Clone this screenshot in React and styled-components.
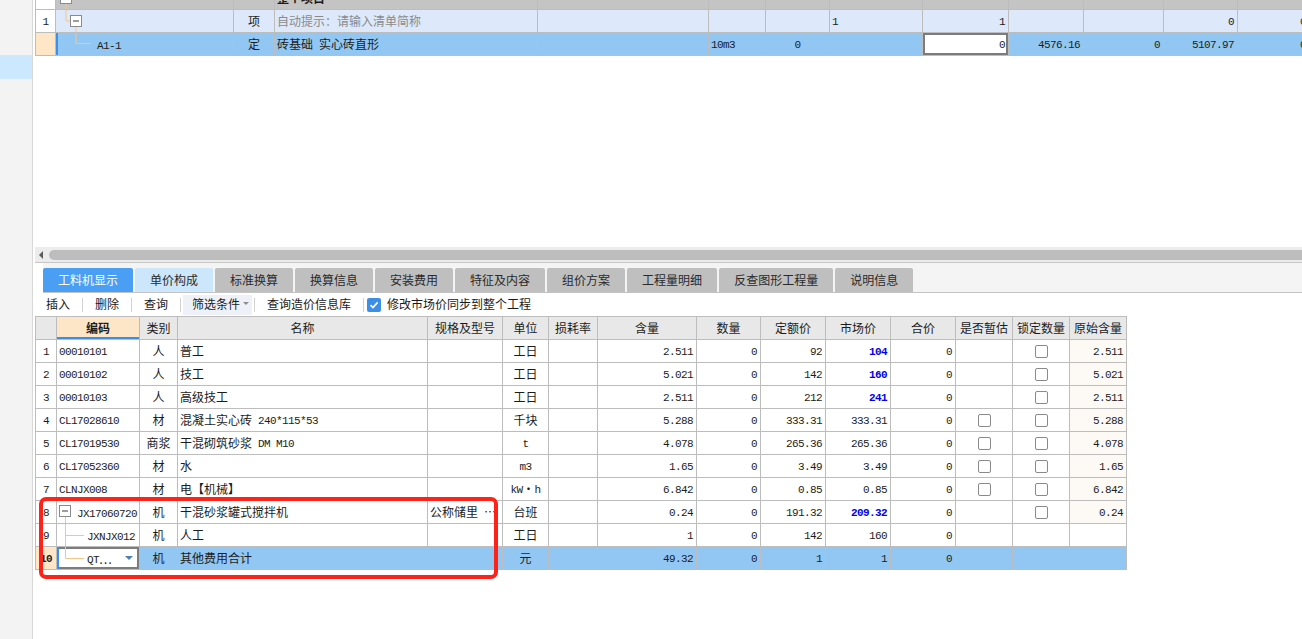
import React from 'react';
import styled, { createGlobalStyle } from 'styled-components';

const GlobalStyle = createGlobalStyle`
  html, body {
    margin: 0;
    padding: 0;
    background: #fff;
    overflow: hidden;
  }
  body {
    font-family: "Noto Sans CJK SC", "Microsoft YaHei", sans-serif;
    font-size: 12px;
    color: #1c1c1c;
  }
`;

const GRID_LINE = '#bdbdbd';
const TOP_COLS = [20, 178, 41, 263, 171, 57, 64, 93, 86, 75, 80, 74, 72];
const BOT_COLS = [21, 83, 38, 250, 75, 46, 49, 99, 64, 65, 65, 65, 57, 57, 57];

const Page = styled.div`
  display: flex;
  height: 639px;
  overflow: hidden;
`;

const Sidebar = styled.aside`
  width: 32px;
  flex: none;
  background: #f3f3f3;
  border-right: 1px solid #d8d8d8;
  padding-top: 55px;
`;

const SideItem = styled.div`
  height: 24px;
  background: #cce8ff;
`;

const Main = styled.main`
  flex: 1;
  min-width: 0;
  display: flex;
  flex-direction: column;
`;

const TopPane = styled.section`
  height: 247px;
  overflow: hidden;
  padding-left: 2px;
`;

const TopGrid = styled.div`
  width: max-content;
  border-left: 1px solid ${GRID_LINE};
  margin-top: -13px;
`;

const Row = styled.div`
  display: grid;
  grid-template-columns: ${p => p.$cols.map(c => `${c}px`).join(' ')};
  background: ${p => p.$tone || '#fff'};
`;

const Cell = styled.div`
  box-sizing: border-box;
  height: 23px;
  border-right: 1px solid ${GRID_LINE};
  border-bottom: 1px solid ${GRID_LINE};
  display: flex;
  align-items: center;
  justify-content: ${p => (p.$align === 'right' ? 'flex-end' : p.$align === 'center' ? 'center' : 'flex-start')};
  padding: ${p => (p.$align === 'right' ? '0 3px 2px 2px' : '0 2px 2px')};
  overflow: hidden;
  white-space: nowrap;
  background: ${p => p.$bg || 'transparent'};
  color: ${p => (p.$hot ? '#0000f0' : p.$muted ? '#8a8a8a' : '#1c1c1c')};
  font-weight: ${p => (p.$hot || p.$strong ? 700 : 400)};
`;

const TreeCell = styled(Cell)`
  padding: 0;
  box-shadow: ${p => (p.$current ? 'inset 2px 0 0 #3b8ff0' : 'none')};
`;

const NoCell = styled(Cell)`
  justify-content: center;
  padding: 0 0 2px;
  background: ${p => (p.$current ? '#ffe6c7' : '#fff')};
`;

const EditCell = styled(Cell)`
  padding: 0 6px 0 0;
  background: #fff;
  box-shadow: inset 2px 0 0 #3b8ff0, inset 0 0 0 2px #7c7c7c;
`;

const InputCell = styled(Cell)`
  background: #fff;
  box-shadow: inset 0 0 0 2px #7c7c7c;
`;

const Label = styled.span`
  white-space: pre;
`;

const Latin = styled.span`
  font-family: "Liberation Mono", "DejaVu Sans Mono", monospace;
  font-size: 11px;
  letter-spacing: -0.6px;
  vertical-align: 1px;
`;

const HScroll = styled.div`
  margin-left: 2px;
  height: 15px;
  background: #ececec;
  border-bottom: 1px solid #c6c6c6;
  display: flex;
  align-items: center;
  gap: 6px;
  padding-left: 4px;
`;

const ScrollArrow = styled.span`
  width: 0;
  height: 0;
  border-top: 4px solid transparent;
  border-bottom: 4px solid transparent;
  border-right: 4px solid #5c5c5c;
`;

const Thumb = styled.div`
  flex: 1;
  height: 10px;
  background: #bdbdbd;
  border-radius: 5px 0 0 5px;
`;

const TabBar = styled.nav`
  margin-left: 10px;
  height: 30px;
  box-sizing: border-box;
  padding-top: 5px;
  background: #f4f4f4;
  border-bottom: 1px solid #c4c4c4;
  display: flex;
  gap: 2px;
`;

const Tab = styled.div`
  height: 24px;
  box-sizing: border-box;
  padding: 0 15px 2px;
  display: flex;
  align-items: center;
  border-radius: 2px 2px 0 0;
  background: ${p => (p.$active ? '#4a9ef4' : p.$soft ? '#cce6fb' : '#bfbfbf')};
  color: ${p => (p.$active ? '#fff' : '#2a2a2a')};
  white-space: nowrap;
`;

const Toolbar = styled.div`
  height: 23px;
  margin-left: 1px;
  display: flex;
  align-items: center;
  background: #fff;
`;

const ToolBtn = styled.span`
  padding: 0 12px 2px;
  line-height: 21px;
  color: #1a1a1a;
  white-space: nowrap;
`;

const FilterBtn = styled.span`
  margin: 0 2px;
  padding: 0 3px 2px 9px;
  height: 20px;
  box-sizing: border-box;
  display: flex;
  align-items: center;
  gap: 3px;
  background: #eef2f8;
  color: #1a1a1a;
`;

const Caret = styled.span`
  width: 0;
  height: 0;
  border-left: 3px solid transparent;
  border-right: 3px solid transparent;
  border-top: 3px solid #8c8c8c;
`;

const Sep = styled.span`
  width: 1px;
  height: 14px;
  background: #d2d2d2;
`;

const CheckOn = styled.span`
  margin-left: 3px;
  width: 14px;
  height: 14px;
  border-radius: 2px;
  background: #3d8ee6;
  display: flex;
  align-items: center;
  justify-content: center;
`;

const CheckLabel = styled.span`
  margin-left: 6px;
  padding-bottom: 2px;
  color: #1a1a1a;
  white-space: nowrap;
`;

const BottomGrid = styled.div`
  position: relative;
  width: max-content;
  margin-left: 2px;
  border-left: 1px solid ${GRID_LINE};
  border-top: 1px solid ${GRID_LINE};
`;

const HeadCell = styled(Cell)`
  justify-content: center;
  background: ${p => (p.$sorted ? '#fde6c8' : '#e8e8e8')};
  font-weight: ${p => (p.$sorted ? 700 : 400)};
  box-shadow: ${p => (p.$sorted ? 'inset 0 -2px 0 #3d8ee8' : 'none')};
`;

const Box = styled.span`
  width: 13px;
  height: 13px;
  box-sizing: border-box;
  border: 1px solid #8a8a8a;
  border-radius: 2px;
  background: #fff;
  margin-top: 2px;
`;

const DropArrow = styled.span`
  margin-left: auto;
  width: 0;
  height: 0;
  border-left: 4px solid transparent;
  border-right: 4px solid transparent;
  border-top: 4px solid #4d7fb3;
`;

const Marker = styled.div`
  position: absolute;
  left: 3px;
  top: 180px;
  width: 459px;
  height: 82px;
  box-sizing: border-box;
  border: 4px solid #ff2219;
  border-radius: 7px;
  pointer-events: none;
`;

const ASCII = /^[\x20-\x7e]+$/;

const Txt = ({ children }) => {
  if (typeof children !== 'string' || !children) return null;
  return (
    <Label>
      {children
        .split(/([\x20-\x7e]+)/)
        .filter(Boolean)
        .map((part, i) => (ASCII.test(part) ? <Latin key={i}>{part}</Latin> : <React.Fragment key={i}>{part}</React.Fragment>))}
    </Label>
  );
};

const LINE = '#f5c686';

const TreeBox = ({ x, y }) => (
  <>
    <rect x={x + 0.5} y={y + 0.5} width="11" height="11" fill="#fff" stroke="#8a8a8a" />
    <line x1={x + 3} x2={x + 9} y1={y + 6} y2={y + 6} stroke="#3a3a3a" />
  </>
);

// tree lines in the top grid
const TopTree = ({ level }) => {
  if (level === 0) {
    return (
      <svg width="40" height="22">
        <line x1="10" x2="10" y1="17" y2="22" stroke={LINE} />
        <TreeBox x={4} y={5} />
      </svg>
    );
  }
  if (level === 1) {
    return (
      <svg width="40" height="22">
        <polyline points="10,0 10,11 14,11" fill="none" stroke={LINE} />
        <line x1="20" x2="20" y1="17" y2="22" stroke={LINE} />
        <TreeBox x={14} y={5} />
      </svg>
    );
  }
  return (
    <svg width="41" height="22">
      <polyline points="20,0 20,10.5 35,10.5" fill="none" stroke={LINE} />
    </svg>
  );
};

// tree lines in the bottom grid
const SubTree = ({ kind }) => {
  if (kind === 'open') {
    return (
      <svg width="20" height="22">
        <line x1="8.5" x2="8.5" y1="16" y2="22" stroke={LINE} />
        <TreeBox x={2} y={4} />
      </svg>
    );
  }
  return (
    <svg width="30" height="22">
      <polyline
        points={kind === 'mid' ? '8.5,0 8.5,22' : '8.5,0 8.5,11.5'}
        fill="none"
        stroke={LINE}
      />
      <line x1="8.5" x2="27" y1="11.5" y2="11.5" stroke={LINE} />
    </svg>
  );
};

const TABS = ['工料机显示', '单价构成', '标准换算', '换算信息', '安装费用', '特征及内容', '组价方案', '工程量明细', '反查图形工程量', '说明信息'];

const HEADS = ['', '编码', '类别', '名称', '规格及型号', '单位', '损耗率', '含量', '数量', '定额价', '市场价', '合价', '是否暂估', '锁定数量', '原始含量'];

const ROWS = [
  { no: '1', code: '00010101', type: '人', name: '普工', unit: '工日', qty: '2.511', base: '92', market: '104', hot: true, lock: true, orig: '2.511' },
  { no: '2', code: '00010102', type: '人', name: '技工', unit: '工日', qty: '5.021', base: '142', market: '160', hot: true, lock: true, orig: '5.021' },
  { no: '3', code: '00010103', type: '人', name: '高级技工', unit: '工日', qty: '2.511', base: '212', market: '241', hot: true, lock: true, orig: '2.511' },
  { no: '4', code: 'CL17028610', type: '材', name: '混凝土实心砖 240*115*53', unit: '千块', qty: '5.288', base: '333.31', market: '333.31', est: true, lock: true, orig: '5.288' },
  { no: '5', code: 'CL17019530', type: '商浆', name: '干混砌筑砂浆 DM M10', unit: 't', qty: '4.078', base: '265.36', market: '265.36', est: true, lock: true, orig: '4.078' },
  { no: '6', code: 'CL17052360', type: '材', name: '水', unit: 'm3', qty: '1.65', base: '3.49', market: '3.49', est: true, lock: true, orig: '1.65' },
  { no: '7', code: 'CLNJX008', type: '材', name: '电【机械】', unit: 'kW・h', qty: '6.842', base: '0.85', market: '0.85', est: true, lock: true, orig: '6.842' },
  { no: '8', code: 'JX17060720', tree: 'open', type: '机', name: '干混砂浆罐式搅拌机', spec: '公称储里 …', unit: '台班', qty: '0.24', base: '191.32', market: '209.32', hot: true, lock: true, orig: '0.24' },
  { no: '9', code: 'JXNJX012', tree: 'mid', type: '机', name: '人工', unit: '工日', qty: '1', base: '142', market: '160', plain: true },
  { no: '10', code: 'QT…', tree: 'last', type: '机', name: '其他费用合计', unit: '元', qty: '49.32', base: '1', market: '1', current: true, plain: true },
];

const DataRow = ({ r }) => (
  <Row $cols={BOT_COLS} $tone={r.current ? '#92c7f3' : '#fff'}>
    <NoCell $current={r.current} $strong={r.current}><Txt>{r.no}</Txt></NoCell>
    {r.current ? (
      <EditCell>
        <SubTree kind={r.tree} />
        <Txt>{r.code}</Txt>
        <DropArrow />
      </EditCell>
    ) : r.tree ? (
      <TreeCell>
        <SubTree kind={r.tree} />
        <Txt>{r.code}</Txt>
      </TreeCell>
    ) : (
      <Cell><Txt>{r.code}</Txt></Cell>
    )}
    <Cell $align="center"><Txt>{r.type}</Txt></Cell>
    <Cell><Txt>{r.name}</Txt></Cell>
    <Cell><Txt>{r.spec}</Txt></Cell>
    <Cell $align="center"><Txt>{r.unit}</Txt></Cell>
    <Cell />
    <Cell $align="right"><Txt>{r.qty}</Txt></Cell>
    <Cell $align="right"><Txt>0</Txt></Cell>
    <Cell $align="right"><Txt>{r.base}</Txt></Cell>
    <Cell $align="right" $hot={r.hot}><Txt>{r.market}</Txt></Cell>
    <Cell $align="right"><Txt>0</Txt></Cell>
    <Cell $align="center">{r.est && <Box />}</Cell>
    <Cell $align="center">{r.lock && <Box />}</Cell>
    <Cell $align="right" $bg={r.plain ? undefined : '#fdfaf5'}><Txt>{r.orig}</Txt></Cell>
  </Row>
);

const App = () => (
  <>
    <GlobalStyle />
    <Page>
      <Sidebar>
        <SideItem />
      </Sidebar>
      <Main>
        <TopPane>
          <TopGrid>
            <Row $cols={TOP_COLS} $tone="#c4c4c4">
              <NoCell />
              <TreeCell><TopTree level={0} /></TreeCell>
              <Cell />
              <Cell $strong>整个项目</Cell>
              <Cell /><Cell /><Cell /><Cell /><Cell /><Cell /><Cell /><Cell /><Cell />
            </Row>
            <Row $cols={TOP_COLS} $tone="#dde9fb">
              <NoCell><Txt>1</Txt></NoCell>
              <TreeCell><TopTree level={1} /></TreeCell>
              <Cell $align="center">项</Cell>
              <Cell $muted>自动提示：请输入清单简称</Cell>
              <Cell />
              <Cell />
              <Cell />
              <Cell><Txt>1</Txt></Cell>
              <Cell $align="right"><Txt>1</Txt></Cell>
              <Cell />
              <Cell />
              <Cell $align="right"><Txt>0</Txt></Cell>
              <Cell $align="right"><Txt>0</Txt></Cell>
            </Row>
            <Row $cols={TOP_COLS} $tone="#92c7f3">
              <NoCell $current />
              <TreeCell $current>
                <TopTree level={2} />
                <Txt>A1-1</Txt>
              </TreeCell>
              <Cell $align="center">定</Cell>
              <Cell><Txt>砖基础 实心砖直形</Txt></Cell>
              <Cell />
              <Cell><Txt>10m3</Txt></Cell>
              <Cell $align="center"><Txt>0</Txt></Cell>
              <Cell />
              <InputCell $align="right"><Txt>0</Txt></InputCell>
              <Cell $align="right"><Txt>4576.16</Txt></Cell>
              <Cell $align="right"><Txt>0</Txt></Cell>
              <Cell $align="right"><Txt>5107.97</Txt></Cell>
              <Cell $align="right"><Txt>0</Txt></Cell>
            </Row>
          </TopGrid>
        </TopPane>

        <HScroll>
          <ScrollArrow />
          <Thumb />
        </HScroll>

        <TabBar>
          {TABS.map((t, i) => (
            <Tab key={t} $active={i === 0} $soft={i === 1}>{t}</Tab>
          ))}
        </TabBar>

        <Toolbar>
          <ToolBtn>插入</ToolBtn>
          <Sep />
          <ToolBtn>删除</ToolBtn>
          <Sep />
          <ToolBtn>查询</ToolBtn>
          <Sep />
          <FilterBtn>筛选条件<Caret /></FilterBtn>
          <Sep />
          <ToolBtn>查询造价信息库</ToolBtn>
          <Sep />
          <CheckOn>
            <svg width="10" height="10" viewBox="0 0 10 10">
              <polyline points="1.5,5.2 4,7.6 8.6,2.4" fill="none" stroke="#fff" strokeWidth="1.6" />
            </svg>
          </CheckOn>
          <CheckLabel>修改市场价同步到整个工程</CheckLabel>
        </Toolbar>

        <BottomGrid>
          <Row $cols={BOT_COLS} $tone="#e8e8e8">
            {HEADS.map((h, i) => (
              <HeadCell key={i} $sorted={i === 1}>{h}</HeadCell>
            ))}
          </Row>
          {ROWS.map(r => (
            <DataRow key={r.no} r={r} />
          ))}
          <Marker />
        </BottomGrid>
      </Main>
    </Page>
  </>
);

export default App;
